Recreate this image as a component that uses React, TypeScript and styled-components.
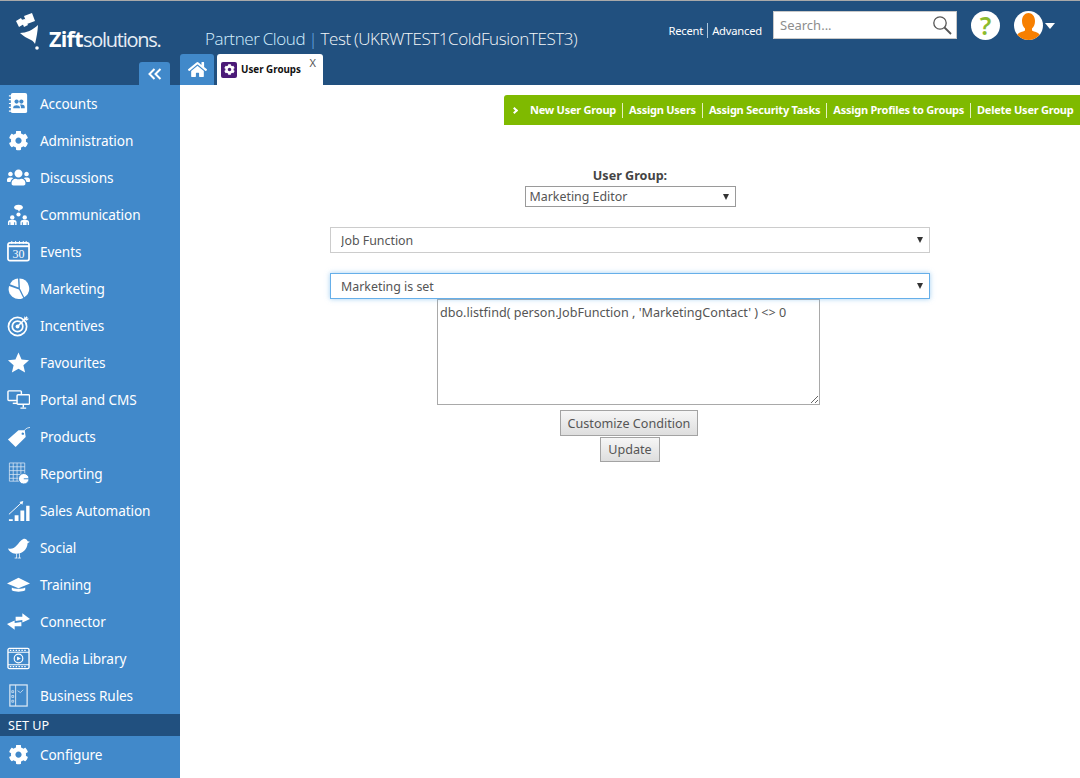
import * as React from 'react';
import styled, { createGlobalStyle } from 'styled-components';
import { FaCog, FaHome, FaUsers } from 'react-icons/fa';

const FONT = `"Noto Sans", "Open Sans", sans-serif`;

const GlobalStyle = createGlobalStyle`
  html, body {
    margin: 0;
    padding: 0;
    background: #fff;
    font-family: ${FONT};
  }
  * { box-sizing: border-box; }
`;

const Page = styled.div`
  width: 1080px;
  height: 778px;
  overflow: hidden;
  display: grid;
  grid-template-columns: 180px 1fr;
  grid-template-rows: 85px 1fr;
`;

const Header = styled.header`
  grid-column: 1 / 3;
  display: flex;
  background: #21507f;
  border-top: 1px solid #a9a9a9;
`;

const Brand = styled.div`
  width: 180px;
  flex: none;
  display: flex;
  flex-direction: column;
  padding: 11px 10px 0 15px;
`;

const LogoRow = styled.div`
  display: flex;
  align-items: flex-end;
  height: 38px;
  gap: 8px;
`;

const LogoText = styled.div`
  font-size: 20px;
  line-height: 24px;
  letter-spacing: -1.25px;
  color: #e6edf4;
  font-weight: 400;
  font-family: "Open Sans", sans-serif;
  margin-bottom: -2px;
  white-space: nowrap;
  b {
    font-size: 21.5px;
    letter-spacing: -0.7px;
    font-weight: 700;
    color: #fff;
  }
`;

const CollapseButton = styled.button`
  align-self: flex-end;
  width: 31px;
  height: 23px;
  margin-top: auto;
  border: 0;
  padding: 0;
  border-radius: 3px 3px 0 0;
  background: #4189ca;
  display: flex;
  align-items: center;
  justify-content: center;
`;

const TitleColumn = styled.div`
  flex: 1;
  min-width: 0;
  display: flex;
  flex-direction: column;
`;

const Title = styled.div`
  padding: 25px 0 0 25px;
  height: 53px;
  font-size: 17px;
  line-height: 26px;
  font-weight: 300;
  color: #f4f6f8;
  white-space: nowrap;
  font-family: "Open Sans", sans-serif;
  letter-spacing: -0.4px;
  word-spacing: -0.8px;
  span {
    color: #d5f1ff;
  }
  i {
    font-style: normal;
    color: #6db4ea;
  }
`;

const Tabs = styled.div`
  display: flex;
  gap: 3px;
  height: 31px;
`;

const HomeTab = styled.div`
  width: 34px;
  border-radius: 3px 3px 0 0;
  background: #4189ca;
  display: flex;
  align-items: center;
  justify-content: center;
  color: #fff;
  font-size: 19px;
`;

const ActiveTab = styled.div`
  position: relative;
  width: 106px;
  background: #fff;
  border-radius: 3px 3px 0 0;
  display: flex;
  align-items: center;
  gap: 4px;
  padding-left: 4px;
  font-size: 9.8px;
  font-weight: 700;
  color: #111;
  white-space: nowrap;
`;

const TabBadge = styled.span`
  width: 16px;
  height: 16px;
  border-radius: 2px;
  background: #4b1a78;
  color: #fff;
  display: flex;
  align-items: center;
  justify-content: center;
  font-size: 11px;
`;

const TabClose = styled.span`
  position: absolute;
  top: 1px;
  right: 7px;
  font-size: 11px;
  font-weight: 400;
  color: #555;
`;

const HeaderRight = styled.div`
  flex: none;
  display: flex;
  align-items: flex-start;
  padding: 10px 25px 0 0;
`;

const QuickLinks = styled.div`
  display: flex;
  align-items: center;
  margin-top: 12px;
  margin-right: 11px;
  font-size: 11.2px;
  line-height: 15px;
  color: #fff;
  letter-spacing: -0.2px;
`;

const QuickSep = styled.span`
  width: 1px;
  height: 15px;
  margin: 0 4px;
  background: #a9c4dc;
`;

const SearchBox = styled.div`
  width: 184px;
  height: 28px;
  margin-right: 14px;
  background: #fff;
  border: 1px solid #c8c8c8;
  display: flex;
  align-items: center;
  justify-content: space-between;
  padding: 0 4px 0 6px;
  font-size: 13px;
  color: #8d8d8d;
`;

const HelpIcon = styled.div`
  width: 29px;
  height: 29px;
  flex: none;
  margin-right: 14px;
  border-radius: 50%;
  background: #fff;
  color: #8cbb2e;
  font-size: 25px;
  font-weight: 600;
  line-height: 29px;
  text-align: center;
`;

const Avatar = styled.div`
  width: 29px;
  height: 29px;
  flex: none;
  border-radius: 50%;
  background: #fff;
  overflow: hidden;
`;

const AvatarGroup = styled.div`
  display: flex;
  align-items: center;
  gap: 2px;
  height: 29px;
`;

const Caret = styled.span`
  width: 0;
  height: 0;
  border-left: 5px solid transparent;
  border-right: 5px solid transparent;
  border-top: 6px solid #fff;
`;

const Sidebar = styled.nav`
  background: #4189ca;
  display: flex;
  flex-direction: column;
`;

const NavItem = styled.a`
  height: 37px;
  flex: none;
  display: flex;
  align-items: center;
  gap: 10px;
  padding-left: 7px;
  color: #fff;
  font-size: 13.6px;
  white-space: nowrap;
  letter-spacing: -0.1px;
  svg {
    flex: none;
    width: 23px;
    height: 23px;
  }
`;

const NavGear = styled(FaCog)`
  padding: 1.5px;
`;

const SectionLabel = styled.div`
  height: 22px;
  flex: none;
  background: #21507f;
  color: #fff;
  font-size: 12.6px;
  line-height: 24px;
  padding-left: 8px;
`;

const Main = styled.main`
  display: flex;
  flex-direction: column;
  align-items: center;
  color: #555;
`;

const ActionBar = styled.div`
  align-self: flex-end;
  width: 576px;
  height: 30px;
  margin-top: 10px;
  background: #7fba00;
  border-radius: 3px 0 0 0;
  display: flex;
  align-items: center;
  padding: 0 0 2px 8px;
  color: #fff;
  font-size: 11px;
  font-weight: 700;
  white-space: nowrap;
  letter-spacing: -0.24px;
`;

const ActionChevron = styled.span`
  width: 5px;
  height: 5px;
  margin: 3px 13px 0 0;
  border-top: 2px solid #fff;
  border-right: 2px solid #fff;
  transform: rotate(45deg);
`;

const ActionSep = styled.span`
  width: 1px;
  height: 15px;
  margin: 2px 6px 0;
  background: #e4f1c0;
`;

const GroupLabel = styled.label`
  margin-top: 42px;
  font-size: 12.6px;
  line-height: 17px;
  font-weight: 700;
  color: #444;
`;

const SelectWrap = styled.div<{ $width: number; $height: number; $mt: number }>`
  position: relative;
  width: ${(p) => p.$width}px;
  height: ${(p) => p.$height}px;
  margin-top: ${(p) => p.$mt}px;
  flex: none;
  &::after {
    content: '';
    position: absolute;
    top: 50%;
    right: 7px;
    margin-top: -3px;
    border-left: 3.5px solid transparent;
    border-right: 3.5px solid transparent;
    border-top: 6px solid #333;
    pointer-events: none;
  }
`;

const Select = styled.select<{ $focus?: boolean; $pad: number; $strong?: boolean }>`
  display: block;
  appearance: none;
  width: 100%;
  height: 100%;
  background: #fff;
  border: 1px solid ${(p) => (p.$focus ? '#66afe9' : p.$strong ? '#9a9a9a' : '#ccc')};
  box-shadow: ${(p) => (p.$focus ? '0 0 5px rgba(102, 175, 233, 0.6)' : 'none')};
  padding: 0 0 0 ${(p) => p.$pad}px;
  border-radius: 0;
  outline: none;
  font-family: ${FONT};
  font-size: 12.4px;
  color: #555;
`;

const Condition = styled.textarea`
  display: block;
  width: 383px;
  height: 106px;
  flex: none;
  margin: 0 3px 0 0;
  padding: 4px 2px;
  border: 1px solid #a9a9a9;
  border-radius: 0;
  outline: none;
  font-family: ${FONT};
  font-size: 12.6px;
  line-height: 17px;
  color: #555;
`;

const Button = styled.button<{ $mt: number; $width: number; $height: number; $mr?: number }>`
  width: ${(p) => p.$width}px;
  height: ${(p) => p.$height}px;
  margin-top: ${(p) => p.$mt}px;
  margin-right: ${(p) => p.$mr ?? 0}px;
  flex: none;
  padding: 0;
  border: 1px solid #a3a3a3;
  background: linear-gradient(#f6f6f6, #dedede);
  font-family: ${FONT};
  font-size: 12.6px;
  color: #555;
`;

const Svg = ({ children }: { children: React.ReactNode }) => (
  <svg viewBox="0 0 24 24" fill="#fff">{children}</svg>
);

const AccountsIcon = () => (
  <Svg>
    <rect x="4" y="1" width="17" height="21" rx="2" />
    <path d="M2 4h4M2 8h4M2 12h4M2 16h4M2 20h4" stroke="#fff" strokeWidth="1.2" />
    <circle cx="10" cy="10" r="2.2" fill="#4189ca" />
    <circle cx="15" cy="10" r="2.2" fill="#4189ca" />
    <path d="M6.5 16c0-3 7-3 7 0v1h-7zM14.5 17v-1.500c0-1-.4-1.700-1-2.200 2-.8 5 0 5 2.200V17z" fill="#4189ca" />
  </Svg>
);

const CommunicationIcon = () => (
  <Svg>
    <ellipse cx="12" cy="4.500" rx="4.500" ry="2.800" />
    <path d="M11 6.500h3l-1.500 2.500z" />
    <circle cx="12" cy="12" r="2.200" />
    <circle cx="5.500" cy="15" r="2.300" />
    <circle cx="18.500" cy="15" r="2.300" />
    <path d="M1 23v-3c0-1.800 2-2.500 4.500-2.500S10 18.200 10 20v3H8.500v-3h-1v3h-4v-3h-1v3zM14 23v-3c0-1.800 2-2.500 4.500-2.500S23 18.200 23 20v3h-1.500v-3h-1v3h-4v-3h-1v3z" />
  </Svg>
);

const EventsIcon = () => (
  <svg viewBox="0 0 24 24" fill="none" stroke="#fff">
    <rect x="1" y="3" width="22" height="18.500" rx="2" strokeWidth="1.800" />
    <path d="M1 6.500h22" strokeWidth="2" />
    <path d="M5 1v3M9 1v3M13 1v3M17 1v3M20 1v3" strokeWidth="1" />
    <text x="12" y="18.500" textAnchor="middle" fontSize="12.500" fontFamily="Liberation Serif, serif" fill="#fff" stroke="none">30</text>
  </svg>
);

const MarketingIcon = () => (
  <Svg>
    <path d="M13 1.500a10.500 10.500 0 0 1 5 19.500L13.500 12z" />
    <path d="M17 21.800A10.500 10.500 0 0 1 2.200 9.500L12.500 13z" />
    <path d="M3 7.500A10.500 10.500 0 0 1 11.500 1.500l.5 9.500z" />
  </Svg>
);

const IncentivesIcon = () => (
  <svg viewBox="0 0 24 24" fill="none" stroke="#fff">
    <circle cx="11" cy="13" r="9.500" strokeWidth="1.800" />
    <circle cx="11" cy="13" r="5.500" strokeWidth="1.800" />
    <circle cx="11" cy="13" r="2" fill="#fff" stroke="none" />
    <path d="M11 13L21 3" strokeWidth="1.600" />
    <path d="M18 2l1.500 2.500L23 5l-2.500 2-2.500-2z" fill="#fff" stroke="none" />
  </svg>
);

const StarIcon = () => (
  <Svg>
    <path d="M12 1.500l3.200 7.300 7.800.8-5.900 5.200 1.800 7.700-6.900-4.100-6.900 4.100 1.800-7.700L1 9.600l7.800-.8z" />
  </Svg>
);

const PortalIcon = () => (
  <svg viewBox="0 0 24 24" fill="#4189ca" stroke="#fff" strokeWidth="1.500">
    <rect x="1" y="3" width="14" height="10" rx="1" />
    <path d="M6 16h5" />
    <rect x="10.500" y="7" width="13" height="10" rx="1" />
    <path d="M17 17v3M14 21h6" />
  </svg>
);

const ProductsIcon = () => (
  <Svg>
    <path d="M1 15L12 5.500h6.500l1 7L9 23z" />
    <circle cx="16.500" cy="9" r="1.300" fill="#4189ca" />
    <path d="M17 8c1-3 3-5 7-5.500" fill="none" stroke="#fff" strokeWidth=".8" />
  </Svg>
);

const ReportingIcon = () => (
  <svg viewBox="0 0 24 24" fill="none" stroke="#dbe8f4" strokeWidth=".8">
    <path d="M2.500 1h16v19h-16zM2.500 5h16M2.500 9h16M2.500 13h16M2.500 17h16M6.500 1v19M10.500 1v19M14.500 1v19" />
    <circle cx="17.500" cy="17.500" r="5.500" fill="#fff" stroke="#4189ca" strokeWidth="1" />
    <path d="M17.500 17.500h5.500" stroke="#4189ca" strokeWidth="1" />
  </svg>
);

const SalesIcon = () => (
  <Svg>
    <path d="M2 21h4v2H2zM8 17h4v6H8zM14 12h4v11h-4zM20 7h3.500v16H20z" />
    <path d="M2 16L15 4" stroke="#fff" strokeWidth="1" />
    <path d="M13 3l4-1-1 4z" />
  </Svg>
);

const SocialIcon = () => (
  <Svg>
    <path d="M1 13c4 1 6 0 9-3 2-2 4-6 7-7 2-.6 4 .4 4.500 2.500L24 6l-2.500 1.500C21 14 16 19 9 18.500 5 18 2 16 1 13z" />
    <path d="M10 18.500V23M13 18v5M8 23h3M11.500 23h3" stroke="#fff" strokeWidth=".8" fill="none" />
  </Svg>
);

const TrainingIcon = () => (
  <Svg>
    <path d="M12 5L24 11 12 16 0 11z" />
    <path d="M5 15c4 2 10 2 14 0v3c-4 2-10 2-14 0z" />
  </Svg>
);

const ConnectorIcon = () => (
  <Svg>
    <path d="M9 7h7V3.500l8 6-8 3.500V10.500l-7 1z" />
    <path d="M15 17H8v3.500l-8-6 8-3.500v2.500l7-1z" />
  </Svg>
);

const MediaIcon = () => (
  <svg viewBox="0 0 24 24" fill="none" stroke="#fff">
    <rect x="1" y="1.500" width="22" height="21" rx="1.500" strokeWidth="1.400" />
    <path d="M1 5.500h22M1 18.500h22" strokeWidth="1.200" />
    <path d="M3 3.500h18M3 20.500h18" strokeWidth="1.500" strokeDasharray="1.500 1.500" />
    <circle cx="12" cy="12" r="4.500" strokeWidth="1.200" />
    <path d="M10.500 9.800l4 2.200-4 2.200z" fill="#fff" stroke="none" />
  </svg>
);

const RulesIcon = () => (
  <svg viewBox="0 0 24 24" fill="none" stroke="#dbe8f4">
    <rect x="3" y="1" width="18" height="22" strokeWidth="1.300" />
    <path d="M9 1v22" strokeWidth="1" />
    <path d="M5 7h2v2H5zM5 12h2v2H5zM5 17h2v2H5zM11 7l3 2 3-3" strokeWidth=".8" />
  </svg>
);

const navItems: { label: string; icon: React.ReactNode }[] = [
  { label: 'Accounts', icon: <AccountsIcon /> },
  { label: 'Administration', icon: <NavGear /> },
  { label: 'Discussions', icon: <FaUsers /> },
  { label: 'Communication', icon: <CommunicationIcon /> },
  { label: 'Events', icon: <EventsIcon /> },
  { label: 'Marketing', icon: <MarketingIcon /> },
  { label: 'Incentives', icon: <IncentivesIcon /> },
  { label: 'Favourites', icon: <StarIcon /> },
  { label: 'Portal and CMS', icon: <PortalIcon /> },
  { label: 'Products', icon: <ProductsIcon /> },
  { label: 'Reporting', icon: <ReportingIcon /> },
  { label: 'Sales Automation', icon: <SalesIcon /> },
  { label: 'Social', icon: <SocialIcon /> },
  { label: 'Training', icon: <TrainingIcon /> },
  { label: 'Connector', icon: <ConnectorIcon /> },
  { label: 'Media Library', icon: <MediaIcon /> },
  { label: 'Business Rules', icon: <RulesIcon /> },
];

const actions = ['New User Group', 'Assign Users', 'Assign Security Tasks', 'Assign Profiles to Groups', 'Delete User Group'];

function ZiftMark() {
  return (
    <svg width="26" height="37" viewBox="0 0 26 37" fill="#fff">
      <path d="M1 8l5-3 3 6-5 3zM9 3l8-3 3 8-8 3zM6 7l4-1 3 6-4 2z" />
      <path d="M5 20c6 0 13-3 18-8-.3 6-1.500 13-3 19-1-2-2-3-4-4-4-2-8-4-11-7z" />
      <circle cx="22" cy="35" r="1.800" />
    </svg>
  );
}

function SearchIcon() {
  return (
    <svg width="20" height="20" viewBox="0 0 20 20" fill="none" stroke="#555">
      <circle cx="8" cy="8" r="6.200" strokeWidth="1.300" />
      <path d="M12.500 12.500L19 19" strokeWidth="1.800" />
    </svg>
  );
}

function AvatarFigure() {
  return (
    <svg width="29" height="29" viewBox="0 0 29 29" fill="#f77f00">
      <path d="M8 10c0-5 3-8 6.500-8S21 5 21 10c0 3-1 6-3 7.500v2c2 1.500 7 1.500 8 5-2 3-7 5-11.500 5S5 27 3 24.500c1-3.500 6-3.500 8-5v-2C9 16 8 13 8 10z" />
    </svg>
  );
}

function App() : JSX.Element {
  return (
    <Page>
      <GlobalStyle />
      <Header>
        <Brand>
          <LogoRow>
            <ZiftMark />
            <LogoText><b>Zift</b>solutions.</LogoText>
          </LogoRow>
          <CollapseButton aria-label="Collapse">
            <svg width="14" height="12" viewBox="0 0 14 12" fill="none" stroke="#fff" strokeWidth="2">
              <path d="M6.500 1L1.500 6l5 5M12.500 1L7.500 6l5 5" />
            </svg>
          </CollapseButton>
        </Brand>
        <TitleColumn>
          <Title><span>Partner Cloud</span> <i>|</i> Test (UKRWTEST1ColdFusionTEST3)</Title>
          <Tabs>
            <HomeTab><FaHome /></HomeTab>
            <ActiveTab>
              <TabBadge><FaCog /></TabBadge>
              User Groups
              <TabClose>X</TabClose>
            </ActiveTab>
          </Tabs>
        </TitleColumn>
        <HeaderRight>
          <QuickLinks>Recent<QuickSep />Advanced</QuickLinks>
          <SearchBox>Search...<SearchIcon /></SearchBox>
          <HelpIcon>?</HelpIcon>
          <AvatarGroup>
            <Avatar><AvatarFigure /></Avatar>
            <Caret />
          </AvatarGroup>
        </HeaderRight>
      </Header>
      <Sidebar>
        {navItems.map((item) => (
          <NavItem key={item.label}>{item.icon}{item.label}</NavItem>
        ))}
        <SectionLabel>SET UP</SectionLabel>
        <NavItem><NavGear />Configure</NavItem>
      </Sidebar>
      <Main>
        <ActionBar>
          <ActionChevron />
          {actions.map((action, i) => (
            <React.Fragment key={action}>
              {i > 0 && <ActionSep />}
              {action}
            </React.Fragment>
          ))}
        </ActionBar>
        <GroupLabel>User Group:</GroupLabel>
        <SelectWrap $width={211} $height={21} $mt={2}>
          <Select $pad={4} $strong defaultValue="Marketing Editor">
            <option>Marketing Editor</option>
          </Select>
        </SelectWrap>
        <SelectWrap $width={600} $height={26} $mt={20}>
          <Select $pad={10} defaultValue="Job Function">
            <option>Job Function</option>
          </Select>
        </SelectWrap>
        <SelectWrap $width={600} $height={26} $mt={20}>
          <Select $pad={10} $focus defaultValue="Marketing is set">
            <option>Marketing is set</option>
          </Select>
        </SelectWrap>
        <Condition defaultValue="dbo.listfind( person.JobFunction , 'MarketingContact' ) <> 0" />
        <Button $mt={5} $width={138} $height={26} $mr={2}>Customize Condition</Button>
        <Button $mt={1} $width={60} $height={25}>Update</Button>
      </Main>
    </Page>
  );
}

export default App;
